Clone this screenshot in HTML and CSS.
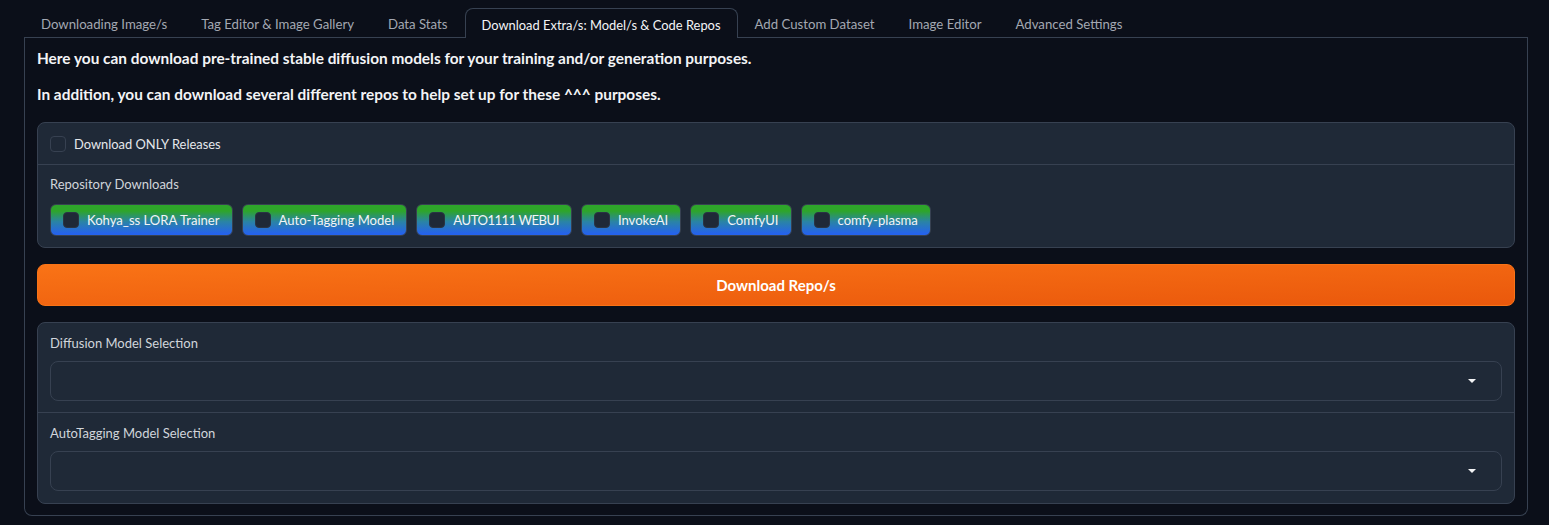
FILE: index.html
```html
<!DOCTYPE html>
<html>
<head>
<meta charset="utf-8">
<link rel="stylesheet" href="styles.css">
</head>
<body>
<div class="app">
  <div class="tabs">
    <div class="tab">Downloading Image/s</div>
    <div class="tab">Tag Editor &amp; Image Gallery</div>
    <div class="tab">Data Stats</div>
    <div class="tab active">Download Extra/s: Model/s &amp; Code Repos</div>
    <div class="tab">Add Custom Dataset</div>
    <div class="tab">Image Editor</div>
    <div class="tab">Advanced Settings</div>
  </div>
  <div class="panel">
    <p class="prose">Here you can download pre-trained stable diffusion models for your training and/or generation purposes.</p>
    <p class="prose last">In addition, you can download several different repos to help set up for these ^^^ purposes.</p>

    <div class="block">
      <div class="check-row">
        <span class="cbox"></span>
        <span class="check-label">Download ONLY Releases</span>
      </div>
      <div class="section repo">
        <div class="label">Repository Downloads</div>
        <div class="chips">
          <div class="chip"><span class="cbox dark"></span><span>Kohya_ss LORA Trainer</span></div>
          <div class="chip"><span class="cbox dark"></span><span>Auto-Tagging Model</span></div>
          <div class="chip"><span class="cbox dark"></span><span class="num">AUTO1111 WEBUI</span></div>
          <div class="chip"><span class="cbox dark"></span><span>InvokeAI</span></div>
          <div class="chip"><span class="cbox dark"></span><span>ComfyUI</span></div>
          <div class="chip"><span class="cbox dark"></span><span>comfy-plasma</span></div>
        </div>
      </div>
    </div>

    <button class="primary">Download Repo/s</button>

    <div class="block">
      <div class="section">
        <div class="label">Diffusion Model Selection</div>
        <div class="dropdown"><span class="caret"></span></div>
      </div>
      <div class="section">
        <div class="label">AutoTagging Model Selection</div>
        <div class="dropdown"><span class="caret"></span></div>
      </div>
    </div>
  </div>
</div>
</body>
</html>
```

FILE: styles.css
```css
* { box-sizing: border-box; }
html, body { margin: 0; padding: 0; }
body {
  background: #0b0f19;
  color: #f3f4f6;
  font-family: "Lato", "Noto Sans", sans-serif;
  width: 1549px;
  height: 525px;
  overflow: hidden;
}
.app {
  padding: 8px 21px 0 24px;
}
.tabs {
  display: flex;
  height: 30px;
  border-bottom: 1px solid #374151;
}
.tab {
  padding: 2px 16px 0;
  display: flex;
  align-items: center;
  font-size: 13.2px;
  color: #a3a8b2;
  border: 1px solid transparent;
  border-bottom: none;
  white-space: nowrap;
}
.tab.active {
  color: #f3f4f6;
  background: #0b0f19;
  border: 1px solid #374151;
  border-bottom: none;
  border-radius: 8px 8px 0 0;
  height: 30px;
  margin-bottom: -1px;
  font-size: 12.9px;
}
.panel {
  border: 1px solid #374151;
  border-top: none;
  border-radius: 0 0 8px 8px;
  padding: 10px 12px 11px;
  display: flex;
  flex-direction: column;
  gap: 16px;
}
.prose {
  margin: 0;
  font-weight: 700;
  font-size: 15.4px;
  line-height: 20px;
  color: #f3f4f6;
}
.prose.last {
  margin-bottom: 2px;
}
.block {
  background: #1f2937;
  border: 1px solid #374151;
  border-radius: 8px;
  display: flex;
  flex-direction: column;
}
.section {
  padding: 11px 12px 11px;
}
.section:last-child {
  padding-bottom: 12px;
}
.section + .section,
.check-row + .section {
  border-top: 1px solid #374151;
}
.check-row {
  display: flex;
  align-items: center;
  gap: 8px;
  height: 41px;
  padding: 0 12px;
}
.cbox {
  width: 16px;
  height: 16px;
  border-radius: 4px;
  border: 1px solid #374151;
  background: #1f2937;
  flex: none;
}
.cbox.dark {
  background: #1f2937;
  border-color: #2a3444;
}
.check-label {
  font-size: 12.9px;
  color: #e5e7eb;
}
.label {
  font-size: 13px;
  line-height: 18px;
  color: #d1d5db;
  margin-bottom: 9px;
}
.section.repo {
  padding: 10px 12px 11px;
}
.repo .label {
  margin-bottom: 11px;
}
.chips {
  display: flex;
  gap: 9px;
}
.chip {
  display: flex;
  align-items: center;
  gap: 8px;
  height: 32px;
  padding: 0 12px;
  border: 1px solid #374151;
  border-radius: 6px;
  background: linear-gradient(to bottom, #2ea52a 0%, #2ea52a 20%, #2a84a4 55%, #2563eb 95%);
  font-size: 13.1px;
  color: #f3f4f6;
}
.chip .num {
  letter-spacing: -0.5px;
}
.primary {
  height: 42px;
  border: 1px solid #f97316;
  border-radius: 8px;
  background: linear-gradient(to bottom right, #f97316, #ea580c);
  color: #fff;
  font-family: inherit;
  font-weight: 700;
  font-size: 15px;
}
.dropdown {
  height: 40px;
  border: 1px solid #374151;
  border-radius: 8px;
  background: #1f2937;
  display: flex;
  align-items: center;
  justify-content: flex-end;
  padding-right: 25px;
}
.caret {
  width: 0;
  height: 0;
  border-left: 4px solid transparent;
  border-right: 4px solid transparent;
  border-top: 4px solid #f3f4f6;
}
```
